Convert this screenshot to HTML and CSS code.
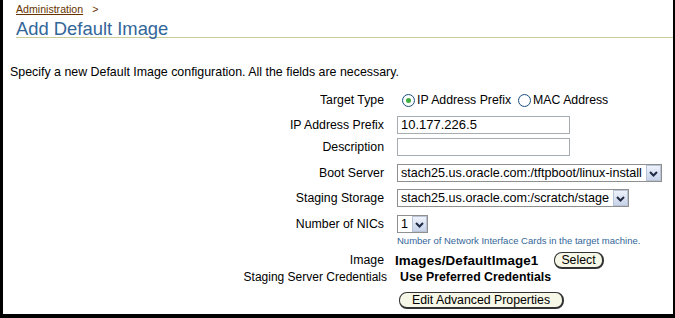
FILE: index.html
```html
<!DOCTYPE html>
<html>
<head>
<meta charset="utf-8">
<link rel="stylesheet" href="styles.css">
</head>
<body>
<div class="page">
  <div class="header">
    <div class="crumbs"><a class="crumb" href="#">Administration</a><span class="sep">&gt;</span></div>
    <h1 class="title">Add Default Image</h1>
  </div>
  <p class="intro">Specify a new Default Image configuration. All the fields are necessary.</p>
  <div class="form">
    <div class="label row-type">Target Type</div>
    <div class="field row-type">
      <span class="radio checked"></span><span class="rtext">IP Address Prefix</span>
      <span class="radio"></span><span class="rtext">MAC Address</span>
    </div>

    <div class="label row-ip">IP Address Prefix</div>
    <div class="field row-ip"><span class="input wide">10.177.226.5</span></div>

    <div class="label row-desc">Description</div>
    <div class="field row-desc"><span class="input wide"></span></div>

    <div class="label row-boot">Boot Server</div>
    <div class="field row-boot"><span class="select"><span class="sval">stach25.us.oracle.com:/tftpboot/linux-install</span><span class="arrow"><svg width="11" height="11" viewBox="0 0 11 11"><path d="M2 4 L5.5 7.5 L9 4" fill="none" stroke="#1f2a44" stroke-width="2"/></svg></span></span></div>

    <div class="label row-stage">Staging Storage</div>
    <div class="field row-stage"><span class="select"><span class="sval">stach25.us.oracle.com:/scratch/stage</span><span class="arrow"><svg width="11" height="11" viewBox="0 0 11 11"><path d="M2 4 L5.5 7.5 L9 4" fill="none" stroke="#1f2a44" stroke-width="2"/></svg></span></span></div>

    <div class="label row-nic">Number of NICs</div>
    <div class="field row-nic">
      <span class="select"><span class="sval">1</span><span class="arrow"><svg width="11" height="11" viewBox="0 0 11 11"><path d="M2 4 L5.5 7.5 L9 4" fill="none" stroke="#1f2a44" stroke-width="2"/></svg></span></span>
      <div class="hint">Number of Network Interface Cards in the target machine.</div>
    </div>

    <div class="label row-img">Image</div>
    <div class="field row-img"><span class="value img-value">Images/DefaultImage1</span><span class="btn select-btn">Select</span></div>
  </div>
  <div class="form creds">
    <div class="label">Staging Server Credentials</div>
    <div class="field"><span class="value cred-value">Use Preferred Credentials</span></div>
  </div>
  <div class="actions"><span class="btn edit-btn">Edit Advanced Properties</span></div>
</div>
</body>
</html>
```
FILE: styles.css
```css
html, body {
  margin: 0;
  padding: 0;
  background: #fff;
}
body {
  font-family: "Liberation Sans", Arial, sans-serif;
  font-size: 12.3px;
  color: #000;
}
.page {
  width: 675px;
  height: 318px;
  box-sizing: border-box;
  border-left: 3px solid #000;
  border-right: 2px solid #000;
  border-bottom: 4px solid #000;
  overflow: hidden;
}
.header {
  margin-left: 13px;
  border-bottom: 1px solid #cccc99;
  height: 38px;
  box-sizing: border-box;
}
.crumbs {
  padding-top: 3px;
  font-size: 10.6px;
  line-height: 13px;
}
.crumb {
  color: #663300;
  text-decoration: underline;
}
.sep {
  color: #663300;
  margin-left: 9px;
}
.title {
  margin: 3px 0 0 0;
  font-weight: normal;
  font-size: 18.4px;
  line-height: 20px;
  color: #336699;
}
.intro {
  margin: 27px 0 0 7px;
  line-height: 14px;
  font-size: 12.4px;
}
.form {
  display: grid;
  grid-template-columns: 381px 1fr;
  column-gap: 13px;
  margin-top: 12px;
}
.label {
  text-align: right;
  display: flex;
  align-items: center;
  justify-content: flex-end;
  height: 18px;
}
.field {
  display: flex;
  align-items: center;
  min-height: 18px;
}
.label.row-ip, .field.row-ip { margin-top: 7px; }
.label.row-desc, .field.row-desc { margin-top: 4px; }
.label.row-boot, .field.row-boot { margin-top: 8px; }
.label.row-stage, .field.row-stage { margin-top: 7px; }
.label.row-nic, .field.row-nic { margin-top: 8px; }
.field.row-nic {
  flex-direction: column;
  align-items: flex-start;
}
.label.row-img, .field.row-img { margin-top: 5px; }

.radio {
  width: 11px;
  height: 11px;
  border: 1px solid #1c5180;
  border-radius: 50%;
  background: radial-gradient(circle, #fff 0, #fff 55%, #dfe6ee 100%);
  box-sizing: content-box;
  margin-left: 5px;
  margin-right: 2px;
  position: relative;
}
.radio.checked::after {
  content: "";
  position: absolute;
  left: 3px;
  top: 3px;
  width: 5px;
  height: 5px;
  border-radius: 50%;
  background: #3fae3f;
}
.rtext { margin-right: 4px; }
.rtext + .radio { margin-left: 3px; }

.input {
  display: inline-block;
  box-sizing: border-box;
  height: 18px;
  border: 1px solid #a5acb2;
  padding: 1px 3px;
  line-height: 14px;
  font-size: 13px;
}
.input.wide { width: 173px; }

.select {
  display: inline-flex;
  align-items: center;
  height: 18px;
  box-sizing: border-box;
  border: 1px solid #8f8f8f;
  font-size: 12.6px;
}
.sval {
  padding: 0 3px 0 3px;
  line-height: 16px;
}
.arrow {
  width: 15px;
  height: 16px;
  box-sizing: border-box;
  border: 1px solid #b9c4d6;
  background: linear-gradient(#eef2fb, #c8d3ea);
  display: flex;
  align-items: center;
  justify-content: center;
  margin-left: 1px;
}
.hint {
  font-size: 9.5px;
  color: #336699;
  line-height: 11px;
  margin-top: 2px;
}
.value {
  font-weight: bold;
}
.img-value {
  margin-left: -2px;
  font-size: 13.4px;
  letter-spacing: 0.1px;
}
.cred-value {
  font-size: 12.3px;
}
.btn {
  display: inline-block;
  background: #f7f7e7;
  border: 1px solid #333;
  border-right-width: 2px;
  border-bottom-width: 2px;
  border-radius: 8px;
  padding: 0 8px;
  line-height: 14px;
  height: 14px;
  font-size: 12.3px;
}
.select-btn {
  margin-left: 16px;
  padding: 0 6px;
}
.edit-btn {
  padding: 0 12px;
}
.creds {
  grid-template-columns: 384px 1fr;
  margin-top: -1px;
}
.creds .label {
  font-size: 12px;
}
.actions {
  padding-left: 396px;
  margin-top: 6px;
}
```
